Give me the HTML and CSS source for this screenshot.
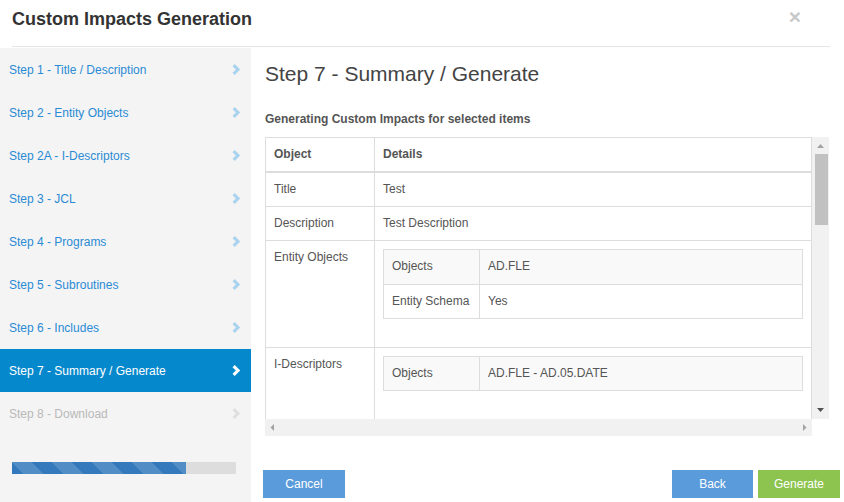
FILE: index.html
```html
<!DOCTYPE html>
<html lang="en">
<head>
<meta charset="utf-8">
<title>Custom Impacts Generation</title>
<link rel="stylesheet" href="styles.css">
</head>
<body>
<div class="modal">
  <header class="modal-header">
    <h1 class="modal-title">Custom Impacts Generation</h1>
    <span class="close">×</span>
  </header>
  <div class="modal-body">
    <nav class="steps">
      <ul class="step-list">
        <li class="step"><span>Step 1 - Title / Description</span><svg class="chev" width="9" height="11" viewBox="0 0 9 11"><polygon points="0.5,2.2 2.7,0 8.2,5.5 2.7,11 0.5,8.8 3.8,5.5"/></svg></li>
        <li class="step"><span>Step 2 - Entity Objects</span><svg class="chev" width="9" height="11" viewBox="0 0 9 11"><polygon points="0.5,2.2 2.7,0 8.2,5.5 2.7,11 0.5,8.8 3.8,5.5"/></svg></li>
        <li class="step"><span>Step 2A - I-Descriptors</span><svg class="chev" width="9" height="11" viewBox="0 0 9 11"><polygon points="0.5,2.2 2.7,0 8.2,5.5 2.7,11 0.5,8.8 3.8,5.5"/></svg></li>
        <li class="step"><span>Step 3 - JCL</span><svg class="chev" width="9" height="11" viewBox="0 0 9 11"><polygon points="0.5,2.2 2.7,0 8.2,5.5 2.7,11 0.5,8.8 3.8,5.5"/></svg></li>
        <li class="step"><span>Step 4 - Programs</span><svg class="chev" width="9" height="11" viewBox="0 0 9 11"><polygon points="0.5,2.2 2.7,0 8.2,5.5 2.7,11 0.5,8.8 3.8,5.5"/></svg></li>
        <li class="step"><span>Step 5 - Subroutines</span><svg class="chev" width="9" height="11" viewBox="0 0 9 11"><polygon points="0.5,2.2 2.7,0 8.2,5.5 2.7,11 0.5,8.8 3.8,5.5"/></svg></li>
        <li class="step"><span>Step 6 - Includes</span><svg class="chev" width="9" height="11" viewBox="0 0 9 11"><polygon points="0.5,2.2 2.7,0 8.2,5.5 2.7,11 0.5,8.8 3.8,5.5"/></svg></li>
        <li class="step active"><span>Step 7 - Summary / Generate</span><svg class="chev" width="9" height="11" viewBox="0 0 9 11"><polygon points="0.5,2.2 2.7,0 8.2,5.5 2.7,11 0.5,8.8 3.8,5.5"/></svg></li>
        <li class="step disabled"><span>Step 8 - Download</span><svg class="chev" width="9" height="11" viewBox="0 0 9 11"><polygon points="0.5,2.2 2.7,0 8.2,5.5 2.7,11 0.5,8.8 3.8,5.5"/></svg></li>
      </ul>
      <div class="progress"><div class="progress-bar" style="width:77.7%"></div></div>
    </nav>
    <main class="content">
      <h2 class="step-title">Step 7 - Summary / Generate</h2>
      <p class="lead-text">Generating Custom Impacts for selected items</p>
      <div class="scroll-box">
        <div class="viewport">
          <table class="tbl">
            <thead>
              <tr><th class="col-obj">Object</th><th>Details</th></tr>
            </thead>
            <tbody>
              <tr><td>Title</td><td>Test</td></tr>
              <tr><td>Description</td><td>Test Description</td></tr>
              <tr><td>Entity Objects</td><td>
                <table class="tbl nested">
                  <tr class="odd"><td class="k">Objects</td><td>AD.FLE</td></tr>
                  <tr><td class="k">Entity Schema</td><td>Yes</td></tr>
                </table>
              </td></tr>
              <tr><td>I-Descriptors</td><td>
                <table class="tbl nested">
                  <tr class="odd"><td class="k">Objects</td><td>AD.FLE - AD.05.DATE</td></tr>
                </table>
              </td></tr>
            </tbody>
          </table>
        </div>
        <div class="vscroll">
          <svg class="arrow" width="17" height="17" viewBox="0 0 17 17"><polygon fill="#a3a3a3" points="5,11 12,11 8.5,7"/></svg>
          <div class="vthumb"></div>
          <div class="spacer"></div>
          <svg class="arrow" width="17" height="17" viewBox="0 0 17 17"><polygon fill="#505050" points="5,6 12,6 8.5,10"/></svg>
        </div>
        <div class="hscroll">
          <svg class="arrow" width="17" height="17" viewBox="0 0 17 17"><polygon fill="#a3a3a3" points="9,5 9,12 5.5,8.5"/></svg>
          <svg class="arrow" width="17" height="17" viewBox="0 0 17 17"><polygon fill="#a3a3a3" points="8,5 8,12 11.5,8.5"/></svg>
        </div>
        <div class="corner"></div>
      </div>
      <div class="footer">
        <button class="btn btn-blue">Cancel</button>
        <div class="btn-group">
          <button class="btn btn-blue btn-back">Back</button>
          <button class="btn btn-green">Generate</button>
        </div>
      </div>
    </main>
  </div>
</div>
</body>
</html>
```

FILE: styles.css
```css
* { box-sizing: border-box; }
html, body { margin: 0; padding: 0; }
body {
  width: 844px;
  height: 502px;
  overflow: hidden;
  background: #fff;
  font-family: "Liberation Sans", Arial, sans-serif;
  font-size: 12px;
  color: #555;
}
.modal { display: flex; flex-direction: column; height: 502px; }

.modal-header {
  height: 47px;
  margin: 0 14px 0 12px;
  padding-bottom: 8px;
  border-bottom: 1px solid #e5e5e5;
  display: flex;
  align-items: center;
  justify-content: space-between;
}
.modal-title {
  margin: 0;
  font-size: 18px;
  font-weight: bold;
  color: #333;
  line-height: 20px;
}
.close {
  font-size: 21px;
  font-weight: bold;
  line-height: 1;
  color: #c8c8c8;
  margin-right: 29px;
  margin-top: -5px;
}

.modal-body {
  flex: 1;
  display: flex;
  margin-top: 1px;
  min-height: 0;
}

.steps {
  width: 251px;
  flex: none;
  background: #f4f4f4;
}
.step-list { list-style: none; margin: 0; padding: 0; }
.step {
  height: 43px;
  display: flex;
  align-items: center;
  justify-content: space-between;
  padding: 0 10px 0 9px;
  color: #2a8bd5;
  font-size: 12px;
}
.chev { fill: #a9d3ee; display: block; }
.step.active { background: #0688cc; color: #fff; }
.step.active .chev { fill: #fff; }
.step.disabled { color: #b9b9b9; }
.step.disabled .chev { fill: #e0e0e0; }

.progress {
  margin: 27px 15px 0 12px;
  height: 12px;
  background: #dddddd;
}
.progress-bar {
  height: 100%;
  background-color: #3479bb;
  background-image: linear-gradient(45deg, rgba(255,255,255,.15) 25%, transparent 25%, transparent 50%, rgba(255,255,255,.15) 50%, rgba(255,255,255,.15) 75%, transparent 75%, transparent);
  background-size: 40px 40px;
}

.content {
  flex: 1;
  padding: 0 4px 0 12px;
  display: flex;
  flex-direction: column;
  min-width: 0;
}
.step-title {
  margin: 14px 0 0 2px;
  font-size: 21px;
  font-weight: normal;
  line-height: 23px;
  color: #444;
}
.lead-text {
  margin: 26px 0 0 2px;
  font-weight: bold;
  font-size: 12px;
  line-height: 17px;
  color: #555;
}

.scroll-box {
  margin: 9px 0 0 2px;
  width: 564px;
  display: grid;
  grid-template-columns: 547px 17px;
  grid-template-rows: 282px 17px;
}
.viewport { overflow: hidden; }
.vscroll {
  background: #f1f1f1;
  display: flex;
  flex-direction: column;
}
.arrow { display: block; flex: none; }
.vthumb {
  height: 71px;
  margin: 0 1px 0 3px;
  background: #c1c1c1;
  flex: none;
}
.spacer { flex: 1; }
.hscroll {
  background: #f1f1f1;
  display: flex;
  justify-content: space-between;
  align-items: center;
}
.corner { background: #fff; }

.tbl {
  width: 100%;
  border-collapse: collapse;
  border-spacing: 0;
  border: 1px solid #ddd;
  font-size: 12px;
  color: #555;
}
.tbl th, .tbl td {
  border: 1px solid #ddd;
  padding: 8px;
  line-height: 1.42857;
  text-align: left;
  vertical-align: top;
}
.tbl th { font-weight: bold; border-bottom-width: 2px; }
.col-obj { width: 109px; }
.nested { margin-bottom: 20px; background: #fff; }
.nested .k { width: 96px; }
.nested tr.odd td { background: #f9f9f9; }

.footer {
  margin-top: 34px;
  display: flex;
  justify-content: space-between;
}
.btn-group { display: flex; gap: 5px; }
.btn {
  width: 82px;
  height: 28px;
  border: 0;
  padding: 0;
  color: #fff;
  font-family: "Liberation Sans", Arial, sans-serif;
  font-size: 12px;
}
.btn-back { width: 81px; }
.btn-blue { background: #5a9bdb; }
.btn-green { background: #8cc44f; }
```
